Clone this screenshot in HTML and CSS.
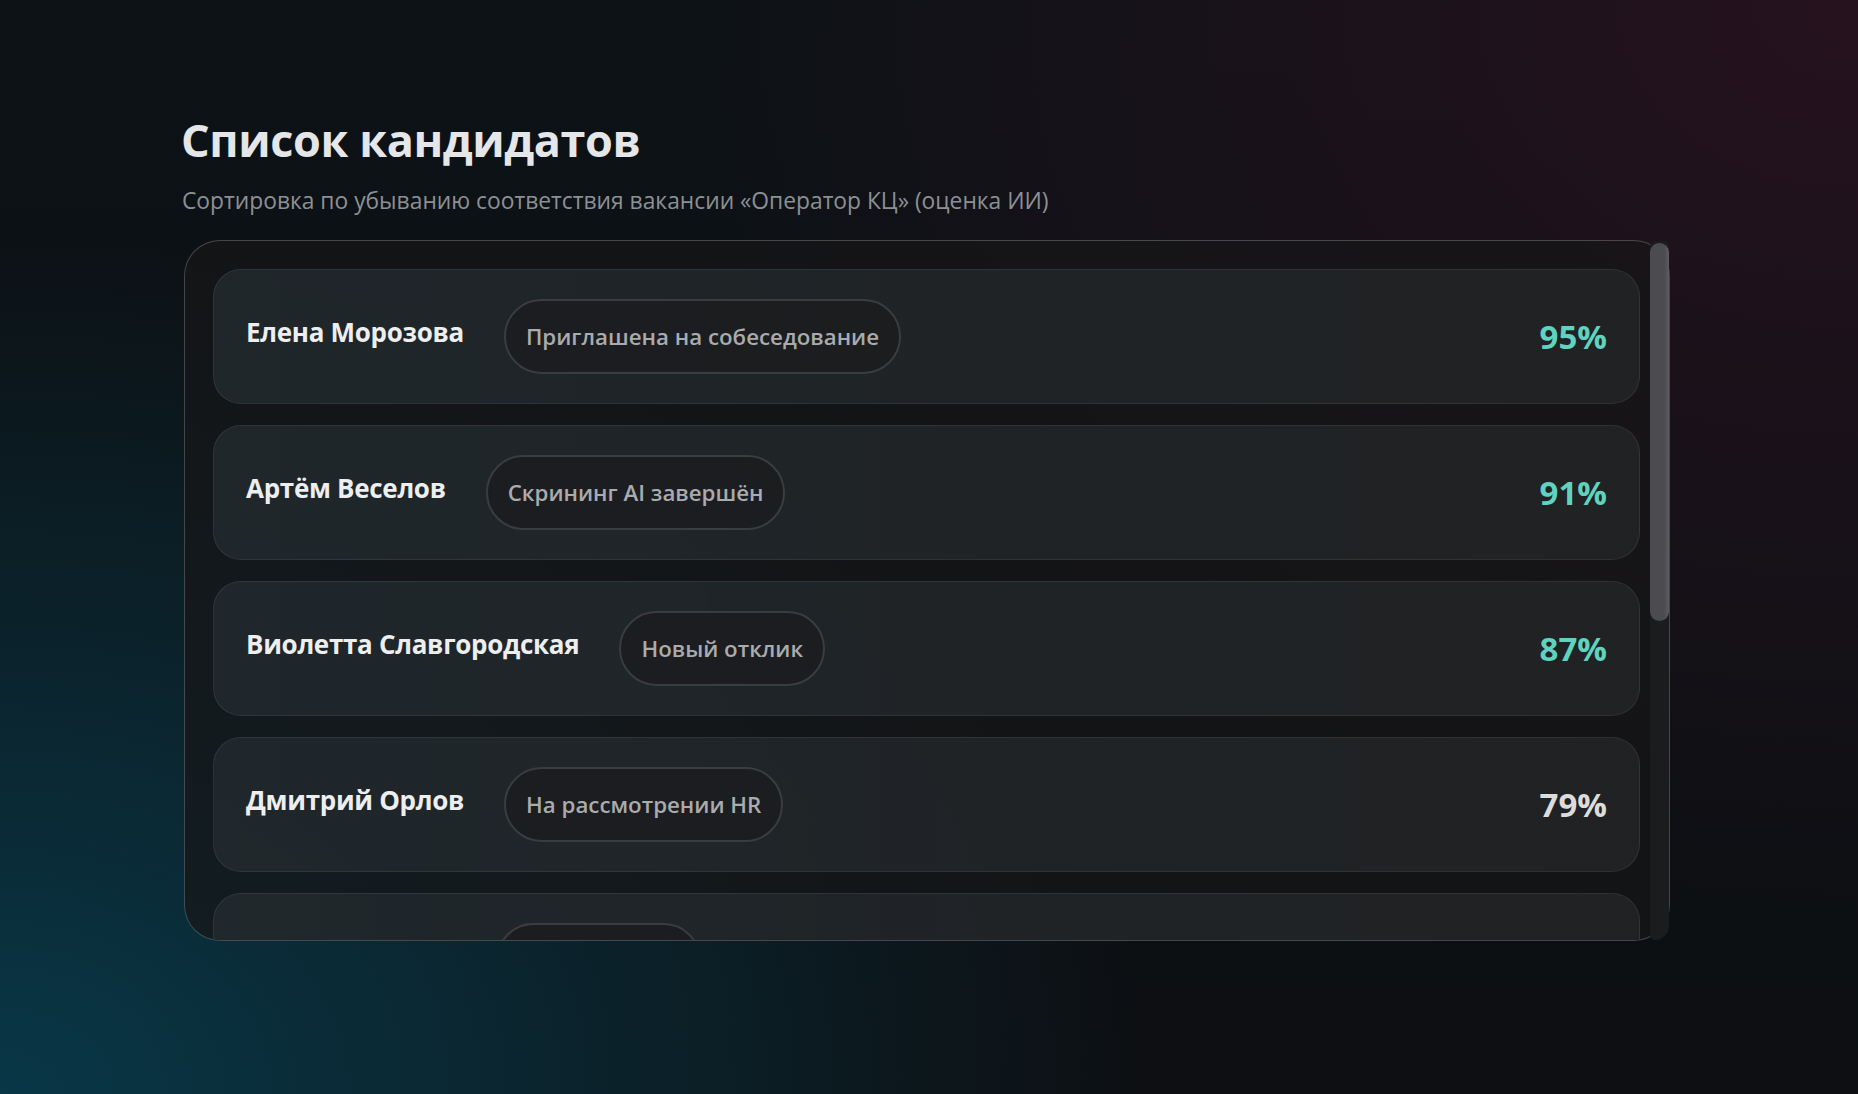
FILE: index.html
```html
<!DOCTYPE html>
<html lang="ru">
<head>
<meta charset="utf-8">
<title>Список кандидатов</title>
<link rel="stylesheet" href="styles.css">
</head>
<body>
<main class="page">
  <h1 class="title">Список кандидатов</h1>
  <p class="subtitle">Сортировка по убыванию соответствия вакансии «Оператор КЦ» (оценка ИИ)</p>
  <section class="list">
    <div class="list-body">
      <div class="card">
        <span class="name">Елена Морозова</span>
        <span class="badge">Приглашена на собеседование</span>
        <span class="score high">95%</span>
      </div>
      <div class="card">
        <span class="name">Артём Веселов</span>
        <span class="badge">Скрининг AI завершён</span>
        <span class="score high">91%</span>
      </div>
      <div class="card">
        <span class="name">Виолетта Славгородская</span>
        <span class="badge">Новый отклик</span>
        <span class="score high">87%</span>
      </div>
      <div class="card">
        <span class="name">Дмитрий Орлов</span>
        <span class="badge">На рассмотрении HR</span>
        <span class="score">79%</span>
      </div>
      <div class="card">
        <span class="name">Анна Смирнова</span>
        <span class="badge">Тест назначен</span>
        <span class="score">74%</span>
      </div>
      <div class="card">
        <span class="name">Игорь Петров</span>
        <span class="badge">На рассмотрении HR</span>
        <span class="score">68%</span>
      </div>
      <div class="card">
        <span class="name">Мария Соколова</span>
        <span class="badge">Новый отклик</span>
        <span class="score">61%</span>
      </div>
      <div class="card">
        <span class="name">Сергей Иванов</span>
        <span class="badge">Ожидает ответа</span>
        <span class="score">55%</span>
      </div>
    </div>
    <div class="scrollbar" aria-hidden="true">
      <div class="thumb"></div>
    </div>
  </section>
</main>
</body>
</html>
```

FILE: styles.css
```css
* { box-sizing: border-box; }

html, body {
  margin: 0;
  height: 100%;
}

body {
  font-family: "Open Sans", "Noto Sans", "DejaVu Sans", sans-serif;
  color: #e6e8ea;
  background-color: #0e1013;
  background-image:
    radial-gradient(ellipse 62% 78% at 0% 100%, rgba(8, 62, 80, 0.85), rgba(8, 62, 80, 0) 100%),
    radial-gradient(ellipse 65% 85% at 100% 0%, rgba(44, 18, 32, 0.8), rgba(44, 18, 32, 0) 100%),
    linear-gradient(180deg, #0c1216 0%, #0d0f12 100%);
  overflow: hidden;
}

.page {
  width: 1490px;
  margin: 0 auto;
  padding: 112px 4px 0 0;
}

.title {
  margin: 0 0 0 -3px;
  font-size: 45px;
  line-height: 55px;
  font-weight: 700;
  color: #e4e6e8;
  letter-spacing: -0.4px;
}

.subtitle {
  margin: 18px 0 24px -2px;
  font-size: 22.8px;
  line-height: 31px;
  color: #8c9094;
}

.list {
  height: 701px;
  display: flex;
  border: 1px solid rgba(255, 255, 255, 0.21);
  border-radius: 36px;
  background: rgba(22, 22, 24, 0.72);
}

.list-body {
  flex: 1;
  min-width: 0;
  overflow: hidden;
  border-radius: 35px 0 0 35px;
  padding: 28px 10px 28px 28px;
  display: flex;
  flex-direction: column;
  gap: 21px;
}

.scrollbar {
  flex: 0 0 19px;
  display: flex;
  flex-direction: column;
  background: #1b1c1e;
  border-radius: 10px 10px 30px 10px;
  padding-top: 2px;
}

.thumb {
  height: 378px;
  background: linear-gradient(90deg, #4c4c50 0%, #4c4c50 75%, #5e5e62 100%);
  border-radius: 10px;
}

.card {
  flex: 0 0 135px;
  display: flex;
  align-items: center;
  padding: 0 32px;
  border: 1px solid rgba(255, 255, 255, 0.075);
  border-radius: 28px;
  background: linear-gradient(90deg, rgba(34, 42, 46, 0.85) 0%, rgba(34, 35, 37, 0.9) 100%);
}

.name {
  font-size: 26px;
  font-weight: 700;
  color: #eceef0;
  margin-bottom: 9px;
  white-space: nowrap;
  letter-spacing: -0.3px;
}

.badge {
  margin-left: 40px;
  padding: 0 20px;
  height: 75px;
  display: inline-flex;
  align-items: center;
  border: 2px solid #3a3d40;
  border-radius: 40px;
  background: rgba(26, 28, 30, 0.8);
  color: #a9abad;
  font-size: 22.3px;
  font-weight: 600;
  white-space: nowrap;
}

.score {
  margin-left: auto;
  font-size: 33px;
  font-weight: 700;
  color: #dcdcdd;
}

.score.high {
  color: #5fd3bf;
}
```
